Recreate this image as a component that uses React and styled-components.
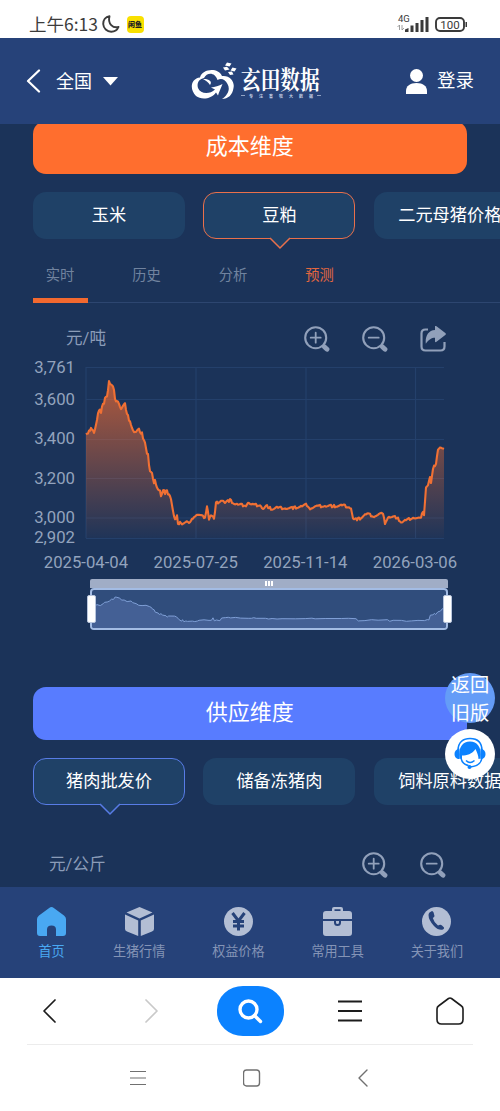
import React from 'react';
import styled, { createGlobalStyle } from 'styled-components';

const GlobalStyle = createGlobalStyle`
  * { box-sizing: border-box; }
  body { margin: 0; background: #fff; }
  svg { display: block; flex: none; }
`;

const Screen = styled.div`
  position: relative;
  width: 500px;
  height: 1111px;
  overflow: hidden;
  display: flex;
  flex-direction: column;
  background: #fff;
  font-family: Roboto, 'Noto Sans CJK SC', sans-serif;
`;

const StatusBar = styled.div`
  height: 38px;
  flex: none;
  display: flex;
  align-items: center;
  padding: 10px 32px 0 29px;
  color: #3c3c3c;
`;
const Clock = styled.span`
  font: 400 17.5px/26px 'Noto Sans CJK SC', sans-serif;
  width: 72.5px;
  white-space: nowrap;
`;
const AppBadge = styled.span`
  width: 17px;
  height: 17px;
  margin-left: 7px;
  border-radius: 4px;
  background: #f9e000;
  color: #222;
  font: 900 7px/16px 'Noto Sans CJK SC', sans-serif;
  text-align: center;
  white-space: nowrap;
`;
const StatusRight = styled.div`
  margin-left: auto;
  display: flex;
  align-items: center;
  gap: 6px;
`;

const Header = styled.header`
  height: 86px;
  flex: none;
  display: grid;
  grid-template-columns: 164px 1fr 100px;
  align-items: center;
  padding: 0 26px 0 26px;
  background: #264279;
  color: #fff;
`;
const Region = styled.div`
  display: flex;
  align-items: center;
  font-size: 18px;
  line-height: 26px;
`;
const RegionName = styled.span`
  margin: 1px 11px 0 15px;
`;
const Brand = styled.div`
  display: flex;
  align-items: center;
  gap: 4px;
`;
const BrandText = styled.div`
  display: flex;
  flex-direction: column;
  width: 80px;
`;
const BrandName = styled.span`
  font: 700 25px/28px 'Noto Serif CJK SC', 'Noto Sans CJK SC', serif;
  transform: scaleX(0.785);
  transform-origin: left;
  white-space: nowrap;
`;
const Slogan = styled.span`
  display: flex;
  align-items: center;
  justify-content: space-between;
  height: 6px;
  margin-top: 1px;
  font: 700 4px/6px 'Noto Sans CJK SC', sans-serif;
  letter-spacing: 6px;
  white-space: nowrap;
  color: #c5cfe4;
  &::before, &::after { content: ''; flex: none; width: 4px; height: 1px; background: #93a3c4; }
  &::after { margin-left: -6px; }
`;
const Login = styled.div`
  display: flex;
  align-items: center;
  justify-content: flex-end;
  gap: 10px;
  font-size: 18.5px;
  line-height: 26px;
`;

const Content = styled.main`
  height: 763px;
  flex: none;
  overflow: hidden;
  background: #1b3359;
`;
const Banner = styled.h2`
  width: 433.5px;
  height: 53px;
  margin: ${(p) => p.$top}px 0 0 33px;
  border-radius: 13px;
  background: ${(p) => p.$color};
  color: #fff;
  font-size: 22px;
  font-weight: 400;
  line-height: 52px;
  text-align: center;
`;
const Chips = styled.div`
  display: flex;
  gap: 18.4px;
  margin: 18px 0 0 33px;
`;
const Chip = styled.div`
  position: relative;
  flex: none;
  display: flex;
  justify-content: center;
  width: 152px;
  height: 47px;
  border: 1.5px solid ${(p) => p.$accent || 'transparent'};
  border-radius: 13px;
  background: #1f4167;
  color: #fff;
  font-size: 17.2px;
  line-height: 44px;
  white-space: nowrap;
`;
const ChipLabel = styled.span`
  flex: none;
  max-width: 104px;
`;
const Pointer = styled.svg`
  position: absolute;
  top: 43.5px;
  left: 65px;
`;

const Tabs = styled.div`
  display: flex;
  gap: 31.5px;
  height: 64px;
  margin-left: 33px;
  border-bottom: 1px solid #2d4670;
`;
const Tab = styled.div`
  width: 55px;
  height: 64px;
  padding: 26px 1px 0 0;
  border-bottom: 5px solid ${(p) => (p.$current ? '#f2692f' : 'transparent')};
  color: ${(p) => (p.$hot ? '#e4673f' : '#71839f')};
  font-size: 14.3px;
  line-height: 20px;
  text-align: center;
`;

const ChartHead = styled.div`
  display: flex;
  align-items: center;
  height: ${(p) => p.$height}px;
  padding: ${(p) => p.$pad};
  color: #8b9cb8;
  font-size: 16.6px;
`;
const Unit = styled.span`
  margin-right: auto;
  line-height: 22px;
`;
const Tools = styled.div`
  display: flex;
  gap: 32px;
`;

const Slider = styled.div`
  position: relative;
  width: 358px;
  height: 51px;
  margin: 0 0 0 90px;
`;
const SliderBar = styled.div`
  display: flex;
  align-items: center;
  justify-content: center;
  gap: 1px;
  height: 9px;
  border-radius: 2px 2px 0 0;
  background: #a0adc6;
`;
const Grip = styled.i`
  width: 2px;
  height: 5px;
  background: #fff;
`;
const SliderWindow = styled.div`
  height: 42px;
  overflow: hidden;
  border: 2px solid #a3bce4;
  border-radius: 4px;
  background: #304d7c;
`;
const Handle = styled.div`
  position: absolute;
  top: 16px;
  ${(p) => p.$side}: ${(p) => (p.$side === 'left' ? '-3.5px' : '-4px')};
  width: 9.5px;
  height: 27.5px;
  border: 1px solid #b9c6dd;
  border-radius: 2px;
  background: #fff;
`;

const FloatStack = styled.div`
  position: absolute;
  top: 673px;
  left: 445px;
  display: flex;
  flex-direction: column;
  gap: 6px;
`;
const FloatButton = styled.div`
  display: flex;
  align-items: center;
  justify-content: center;
  width: 50px;
  height: 50px;
  border-radius: 50%;
  background: ${(p) => p.$color};
  color: #fff;
  font-size: 19.3px;
  line-height: 28px;
  text-align: center;
`;
const FloatLabel = styled.span`
  width: 40px;
  margin-top: 4px;
`;

const BottomNav = styled.nav`
  height: 91px;
  flex: none;
  display: flex;
  justify-content: space-between;
  padding: 20px 37px 0 37px;
  background: #264279;
`;
const NavItem = styled.div`
  display: flex;
  flex-direction: column;
  align-items: center;
  gap: 6px;
  color: ${(p) => (p.$active ? '#49a8f2' : '#8494b6')};
  font-size: 13.1px;
  line-height: 20px;
`;

const BrowserBar = styled.div`
  height: 66px;
  flex: none;
  display: grid;
  grid-template-columns: 98px 106px 92px 108px 92px;
  align-items: center;
  justify-items: center;
`;
const Divider = styled.div`
  height: 1px;
  margin: 0 27px;
  background: #ececec;
`;
const SearchPill = styled.div`
  width: 67px;
  height: 50px;
  display: flex;
  align-items: center;
  justify-content: center;
  border-radius: 26px / 24px;
  background: #0b82ff;
`;
const SystemBar = styled.div`
  height: 65px;
  flex: none;
  display: flex;
  align-items: center;
  justify-content: space-between;
  padding: 0 130px;
`;

const PRICE = [
  [85.7, 434.3], [88.3, 435], [90.7, 426], [94, 431.5], [96.7, 421.7], [98.3, 412.7], [101, 410.7], [103.3, 405], [105.3, 395], [107.3, 396], [109, 382], [110.7, 384], [113.3, 388.5], [115.7, 400], [118, 399.5], [121, 408.5], [125, 405], [126.7, 415], [130, 420], [132.7, 430], [136, 432], [140, 430], [143.3, 437], [145.3, 442], [146.7, 453.3], [148, 455], [149.3, 470], [152.3, 475], [153.3, 483], [155, 478.5], [156.7, 486.7], [160, 490], [161.3, 498], [162.7, 491.7], [168.7, 492.3], [170.7, 497], [173.3, 513.3], [175.7, 521.7], [176.7, 513.5], [178, 525], [180, 521], [181.7, 523.3], [186.7, 521.5], [189, 524], [191.7, 520.7], [193.3, 516.7], [198.3, 514], [203.3, 517], [205.7, 516.5], [207.3, 502.5], [208.7, 519.5], [210.7, 515], [214.3, 519], [216, 503.3], [220, 501], [222.7, 499.5], [225, 503], [230, 500], [235, 504], [242.7, 505], [246, 505], [248.3, 501.7], [250.7, 505], [260, 505], [263.3, 509], [266.7, 506], [271.7, 509], [276.7, 507.7], [290, 508.3], [300, 506.7], [306.7, 504.5], [310, 508], [320, 506], [336.7, 506], [343.3, 505.3], [351, 507.7], [353.3, 520], [360, 518.3], [366.7, 513.5], [373.3, 516], [382.7, 513.5], [385, 522.7], [388.3, 516.7], [396.7, 517.3], [401.7, 522.3], [406.7, 520], [413.3, 517.3], [420, 518.7], [422.7, 512.7], [424.3, 514.3], [425.7, 487], [428.3, 485], [430, 476.7], [431, 483], [433.3, 468], [436, 463], [437.7, 450], [440, 447.5], [444.3, 449],
];

function priceAt(x) {
  let i = 1;
  while (i < PRICE.length - 1 && PRICE[i][0] < x) i += 1;
  const [x0, y0] = PRICE[i - 1];
  const [x1, y1] = PRICE[i];
  return y0 + ((y1 - y0) * (x - x0)) / (x1 - x0);
}

const TICKS = [0, 1.2, -1.3, 0.5, 1.8, -0.8, 1.1, -1.5];
const linePoints = (() => {
  const out = [];
  for (let x = 86, i = 0; x <= 444; x += 1, i += 1) {
    const size = x < 170 ? 1.2 : 0.7;
    const jitter = x > 437 ? 0 : TICKS[(i * 5 + (i >> 3)) % 8] * size;
    out.push(`${x},${(priceAt(x) + jitter).toFixed(1)}`);
  }
  return out.join(' ');
})();

const overviewPoints = PRICE.map(
  ([x, y]) => `${(x - 85.7) * 0.995},${(7 + (y - 382) * 0.173).toFixed(1)}`
).join(' ');

const Y_LABELS = [['3,761', 367], ['3,600', 399], ['3,400', 438.5], ['3,200', 478], ['3,000', 517.5], ['2,902', 537]];
const X_LABELS = [['2025-04-04', 86], ['2025-07-25', 195.7], ['2025-11-14', 305.3], ['2026-03-06', 415]];

const PriceChart = () => (
  <svg width="500" height="224" viewBox="0 355 500 224" fontFamily="Roboto, sans-serif" fontSize="16.7" fill="#93a3bd">
    <defs>
      <linearGradient id="fade" gradientUnits="userSpaceOnUse" x1="0" y1="382" x2="0" y2="538">
        <stop offset="0" stopColor="#ff6e2e" stopOpacity="0.65" />
        <stop offset="1" stopColor="#ff6e2e" stopOpacity="0.02" />
      </linearGradient>
    </defs>
    <path d="M86 367.5H444M86 399.5H444M86 439.5H444M86 478.5H444M86 518H444M86 538.5H444M86 367V538M196 367V538M306 367V538M415.5 367V538" stroke="#24406b" strokeWidth="1.2" fill="none" />
    <polygon points={`86,538 ${linePoints} 444,538`} fill="url(#fade)" />
    <polyline points={linePoints} fill="none" stroke="#f07034" strokeWidth="2.1" strokeLinejoin="round" />
    {Y_LABELS.map(([t, y]) => <text key={t} x="75" y={y + 5.5} textAnchor="end">{t}</text>)}
    {X_LABELS.map(([t, x]) => <text key={t} x={x} y="567.6" textAnchor="middle">{t}</text>)}
  </svg>
);

const ZoomIcon = ({ plus }) => (
  <svg width="26" height="26" viewBox="0 0 26 26" fill="none" stroke="#91a0ba" strokeLinecap="round">
    <circle cx="11.7" cy="11.7" r="10.5" strokeWidth="2.1" />
    <path d={plus ? 'M6.7 11.7H16.7M11.7 6.7V16.7' : 'M6.7 11.7H16.7'} strokeWidth="1.8" />
    <path d="M20.3 20.8L23 23.3" strokeWidth="4.8" />
  </svg>
);
const ShareIcon = () => (
  <svg width="26" height="26" viewBox="0 0 26 26" fill="none">
    <path d="M8 3.500H5.500Q1.500 3.500 1.500 7.500V20.500Q1.500 24.500 5.500 24.500H20.500Q24.500 24.500 24.500 20.500V16" stroke="#91a0ba" strokeWidth="2.2" />
    <path d="M15 .8Q15-.8 16.500.3L25.300 7Q26.500 8 25.300 9L16.500 15.700Q15 16.800 15 15.200V11.800C11.500 11.800 8.800 13.500 5.800 17.800C5 10.500 8 4.500 15 4Z" fill="#91a0ba" />
  </svg>
);
const Chevron = ({ w, h, d, color, stroke }) => (
  <svg width={w} height={h} viewBox={`0 0 ${w} ${h}`} fill="none" stroke={color} strokeWidth={stroke} strokeLinecap="round" strokeLinejoin="round"><path d={d} /></svg>
);
const BrandIcon = () => (
  <svg width="47" height="40" viewBox="0 0 47 40" fill="#fff">
    <path d="M10 16.500C12 8 28 6 32 15C40 14 45 21 43.500 27C42.500 34 38 38 32 38C38 34 40.500 28 37.500 23C35 18 31 17 27.500 19C25 11 17 11 14 17C9 18 6.500 22 8 27C10.500 33.500 20 33.500 25 28.500L21 26.500C25 26 29 25 32.500 23C31 27 29 31 28 34.500L26 31.500C21 38.500 11 39 6 35C-1 28 1 17.500 10 16.500Z" />
    <path d="M13 18C18 17.500 23 20 20 24C18 21 16 19.500 13 18Z" />
    <path d="M37 1.500L41.500 2.500L39.500 5.500L35 4.500ZM42.500 6.500L46.500 7.500L44.500 10.500L40.500 9.500ZM33 6.500L37 5.800L39.500 8.500L35 9.500ZM38 11L42 10.500L43.500 13.500L40 14Z" />
  </svg>
);
const MoonIcon = () => (
  <svg width="18" height="18" viewBox="0 0 18 18" fill="none" stroke="#3c3c3c" strokeWidth="1.9" strokeLinejoin="round">
    <path d="M7.500 1.200C3.500 1.800 1 5 1.200 9C1.500 13.500 5 16.700 9.200 16.700C12.500 16.700 15.300 15 16.500 12C11 13.500 5.500 9 7.500 1.200Z" />
  </svg>
);
const SignalIcon = () => (
  <svg width="32" height="20" viewBox="0 0 32 20" fill="#3a3a3a">
    <text x="1" y="7.5" fontSize="9.5" fontFamily="Roboto, sans-serif">4G</text>
    <path d="M2.500 16V11L.5 13M5 11V16L7 14" stroke="#888" strokeWidth=".8" fill="none" />
    <path d="M8 15.500L11.500 14V18H8ZM13.500 11.500H16.500V18H13.500ZM18.500 9H21.500V18H18.500ZM23.500 6H26.500V18H23.500ZM28.500 3H31.500V18H28.500Z" />
  </svg>
);
const BatteryIcon = () => (
  <svg width="33" height="15" viewBox="0 0 33 15">
    <rect x="1" y="1" width="28" height="13" rx="4" fill="none" stroke="#3a3a3a" strokeWidth="1.9" />
    <path d="M30.500 5H32V10H30.500Z" fill="#3a3a3a" />
    <text x="15" y="11.6" textAnchor="middle" fontSize="11.5" fill="#3a3a3a" fontFamily="Roboto, sans-serif">100</text>
  </svg>
);
const SupportIcon = () => (
  <svg width="32" height="34" viewBox="0 0 32 34" fill="#0b82ff">
    <path d="M4 14C4 4 10 1.500 16 1.500C22 1.500 28 4 28 14" fill="none" stroke="#0b82ff" strokeWidth="1.6" />
    <path d="M5.500 11.500V22H4Q.5 21 .5 17Q.5 12.500 5.500 11.500ZM26.500 11.500V22H28Q31.500 21 31.500 17Q31.500 12.500 26.500 11.500Z" />
    <path d="M5.500 21.500C4 10 9 4.500 16 4.500C23 4.500 28 10 26.500 21.500L24.500 22C24.500 18.500 23 15.500 21.500 12C18 17 13 18.500 8 18.500V22Z" />
    <path d="M7 21C8 26 11 28 14.500 28.500M12 23.500Q16 27.500 20.500 23.500" fill="none" stroke="#0b82ff" strokeWidth="1.5" />
    <path d="M28 21C27 27 22 29.500 16 30" fill="none" stroke="#0b82ff" strokeWidth="1.5" />
    <circle cx="15.5" cy="30" r="2" />
  </svg>
);

const GRAY = '#b3bed4';
const navIcons = {
  home: <path d="M12.200 1Q14.500-.8 16.800 1L27 8.500Q29 10 29 12V26Q29 29 26 29H19V22.500Q19 18.500 14.500 18.500Q10 18.500 10 22.500V29H3Q0 29 0 26V12Q0 10 2 8.500Z" fill="#49a8f2" />,
  cube: <path d="M14.500 0L27.500 5.500L14.500 11.500L1.500 5.500ZM0 7.500L13.200 13.500V29L2 24.500Q0 23.500 0 22ZM29 7.500L15.800 13.500V29L27 24.500Q29 23.500 29 22Z" fill={GRAY} />,
  yen: <><circle cx="14.5" cy="14.5" r="14.5" fill={GRAY} /><path d="M8.500 6L14.500 14L20.500 6M14.500 14V23.500M9 14.500H20M9 19H20" fill="none" stroke="#264279" strokeWidth="3" /></>,
  tools: <path fillRule="evenodd" d="M9 4V2Q9 0 11 0H18Q20 0 20 2V4H26Q29 4 29 7V12H0V7Q0 4 3 4ZM11.500 4H17.500V2.200H11.500ZM0 14H11V15.500Q11 19 14.500 19Q18 19 18 15.500V14H29V26Q29 29 26 29H3Q0 29 0 26ZM13 14H16V15.500Q16 17 14.500 17Q13 17 13 15.500Z" fill={GRAY} />,
  phone: <><circle cx="14.5" cy="14.5" r="14.5" fill={GRAY} /><path d="M7.500 5.500L10 4Q11 4 11.600 5.500L12.500 9Q12.500 10 10.800 11Q12 15.500 16 18.500L18 17.700Q19 17.500 20 18.500L22 20.500Q22.500 21.500 21 22.500Q17 24 12 19Q6.500 13 6.500 8Q6.500 6.500 7.500 5.500Z" fill="#264279" /></>,
};
const NAV = [['home', '首页'], ['cube', '生猪行情'], ['yen', '权益价格'], ['tools', '常用工具'], ['phone', '关于我们']];

const ChipRow = ({ items, active, color }) => (
  <Chips>
    {items.map((label, i) => (
      <Chip key={label} $accent={i === active ? color : undefined}>
        <ChipLabel>{label}</ChipLabel>
        {i === active && (
          <Pointer width="22" height="13" viewBox="0 0 22 13">
            <path d="M1 0L1 1L11 11L21 1V0Z" fill="#1f4167" />
            <path d="M1 1L11 11L21 1" fill="none" stroke={color} strokeWidth="1.5" />
          </Pointer>
        )}
      </Chip>
    ))}
  </Chips>
);

export default function App() {
  return (
    <Screen>
      <GlobalStyle />
      <StatusBar>
        <Clock>上午6:13</Clock>
        <MoonIcon />
        <AppBadge>闲鱼</AppBadge>
        <StatusRight><SignalIcon /><BatteryIcon /></StatusRight>
      </StatusBar>

      <Header>
        <Region>
          <Chevron w={15} h={24} d="M13 1.500L2 12L13 22.500" color="#fff" stroke={2.2} />
          <RegionName>全国</RegionName>
          <svg width="15" height="9" viewBox="0 0 15 9"><path d="M0 0H15L7.500 8.500Z" fill="#fff" /></svg>
        </Region>
        <Brand>
          <BrandIcon />
          <BrandText>
            <BrandName>玄田数据</BrandName>
            <Slogan>专注畜牧大数据</Slogan>
          </BrandText>
        </Brand>
        <Login>
          <svg width="21" height="25" viewBox="0 0 21 25" fill="#fff"><circle cx="10.5" cy="6.5" r="6.5" /><path d="M0 25V22C0 17 4 14 10.500 14S21 17 21 22V25Z" /></svg>
          登录
        </Login>
      </Header>

      <Content>
        <Banner $top={-3} $color="#ff6e2e">成本维度</Banner>
        <ChipRow items={['玉米', '豆粕', '二元母猪价格']} active={1} color="#e9704b" />
        <Tabs>
          <Tab $current>实时</Tab>
          <Tab>历史</Tab>
          <Tab>分析</Tab>
          <Tab $hot>预测</Tab>
        </Tabs>
        <ChartHead $height={52} $pad="19px 54px 0 66px">
          <Unit>元/吨</Unit>
          <Tools><ZoomIcon plus /><ZoomIcon /><ShareIcon /></Tools>
        </ChartHead>
        <PriceChart />
        <Slider>
          <SliderBar><Grip /><Grip /><Grip /></SliderBar>
          <SliderWindow>
            <svg width="356" height="40" viewBox="0 0 356 40">
              <polygon points={`0,40 ${overviewPoints} 356,40`} fill="#446095" />
              <polyline points={overviewPoints} fill="none" stroke="#7f9fd6" strokeWidth="1" />
            </svg>
          </SliderWindow>
          <Handle $side="left" />
          <Handle $side="right" />
        </Slider>
        <Banner $top={57} $color="#587cff">供应维度</Banner>
        <ChipRow items={['猪肉批发价', '储备冻猪肉', '饲料原料数据']} active={0} color="#587ce6" />
        <ChartHead $height={74} $pad="46px 54px 0 49px">
          <Unit>元/公斤</Unit>
          <Tools><ZoomIcon plus /><ZoomIcon /></Tools>
        </ChartHead>
      </Content>

      <BottomNav>
        {NAV.map(([icon, label]) => (
          <NavItem key={icon} $active={icon === 'home'}>
            <svg width="29" height="29" viewBox="0 0 29 29">{navIcons[icon]}</svg>
            {label}
          </NavItem>
        ))}
      </BottomNav>

      <BrowserBar>
        <Chevron w={16} h={26} d="M14 2L3 13L14 24" color="#1c1c1c" stroke={1.7} />
        <Chevron w={16} h={26} d="M3 2L14 13L3 24" color="#c9c9c9" stroke={1.7} />
        <SearchPill>
          <svg width="26" height="26" viewBox="0 0 26 26" fill="none" stroke="#fff" strokeWidth="3.4"><circle cx="11.5" cy="11.5" r="8.5" /><path d="M17.500 17.500L23.500 23.500" strokeLinecap="round" /></svg>
        </SearchPill>
        <svg width="24" height="22" viewBox="0 0 24 22"><path d="M0 1.500H24M0 11H24M0 20.500H24" stroke="#1c1c1c" strokeWidth="1.8" /></svg>
        <svg width="28" height="28" viewBox="0 0 28 28" fill="none" stroke="#1c1c1c" strokeWidth="1.6" strokeLinejoin="round"><path d="M12.500 1.500Q14 .5 15.500 1.500L25.500 9Q27 10 27 12V22.500Q27 27 22.500 27H5.500Q1 27 1 22.500V12Q1 10 2.500 9Z" /></svg>
      </BrowserBar>
      <Divider />
      <SystemBar>
        <svg width="16" height="16" viewBox="0 0 16 16"><path d="M0 1.500H16M0 8H16M0 14.500H16" stroke="#707070" strokeWidth="1.2" /></svg>
        <svg width="18" height="18" viewBox="0 0 18 18"><rect x="0.5" y="1" width="16" height="16" rx="3" fill="none" stroke="#707070" strokeWidth="1.4" /></svg>
        <Chevron w={13} h={18} d="M10 1L2 9L10 17" color="#707070" stroke={1.4} />
      </SystemBar>

      <FloatStack>
        <FloatButton $color="#649cf7"><FloatLabel>返回旧版</FloatLabel></FloatButton>
        <FloatButton $color="#fff"><SupportIcon /></FloatButton>
      </FloatStack>
    </Screen>
  );
}
